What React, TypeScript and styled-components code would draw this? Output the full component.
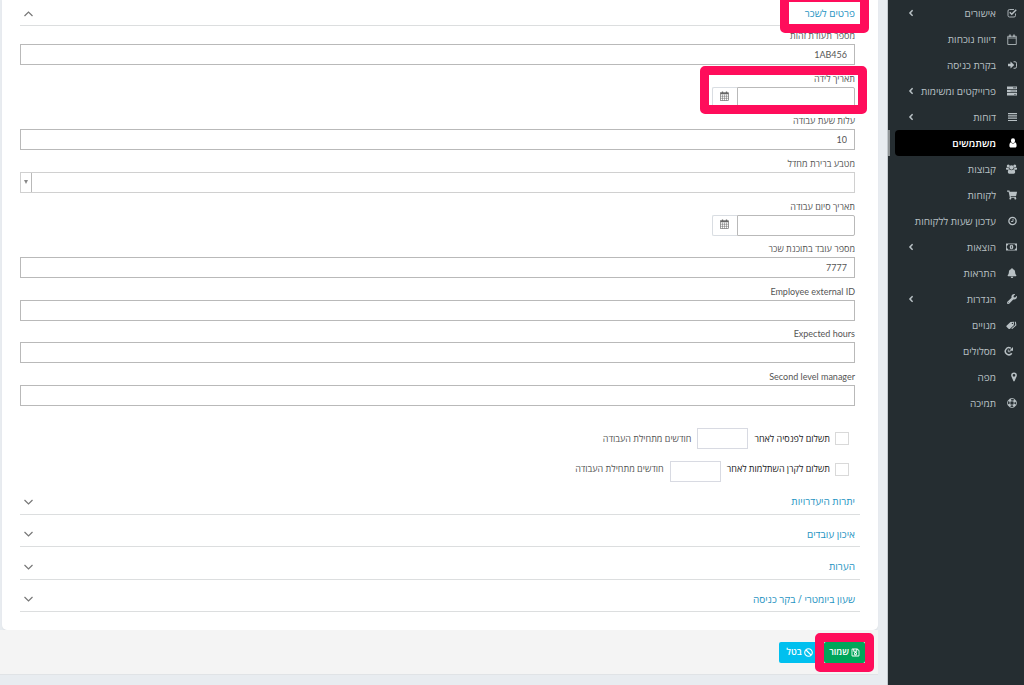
import React from "react";
import styled, { createGlobalStyle, css } from "styled-components";
import { FaShoppingCart, FaBell, FaWrench, FaRegSave, FaBan, FaAngleLeft } from "react-icons/fa";

const GlobalStyle = createGlobalStyle`
  *, *::before, *::after { box-sizing: border-box; }
  body {
    margin: 0;
    background: #e8ecf0;
    color: #555;
    font-family: "Open Sans", "Noto Sans", sans-serif;
    font-size: 9px;
    line-height: 16px;
  }
  button, input, select { font: inherit; color: inherit; }
`;

const Page = styled.div`
  display: flex;
  min-height: 100vh;
`;

const Sidebar = styled.nav`
  flex: 0 0 136px;
  background: #252d31;
  box-shadow: -1px 0 0 #c3c9cd;
`;

const MenuList = styled.ul`
  list-style: none;
  margin: 0;
  padding: 0;
`;

const MenuItem = styled.li<{ $active?: boolean }>`
  height: 26px;
  padding-left: 5px;
  border-left: 2px solid ${(p) => (p.$active ? "#8f9496" : "transparent")};
`;

const MenuLink = styled.a<{ $active?: boolean }>`
  display: flex;
  align-items: center;
  height: 26px;
  padding: 0 7px 0 11px;
  border-radius: 4px 0 0 4px;
  color: #b8c0c4;
  font-size: 10px;
  text-decoration: none;
  white-space: nowrap;
  ${(p) =>
    p.$active &&
    css`
      background: #000;
      color: #fff;
      font-weight: 600;
    `}
`;

const MenuIcon = styled.span`
  display: flex;
  width: 12px;
  margin-left: 9px;
  font-size: 10px;

  svg {
    flex: none;
  }
`;

const MenuChevron = styled(FaAngleLeft)`
  margin-right: auto;
  font-size: 10px;
`;

const Main = styled.main`
  flex: 1;
  min-width: 0;
  padding: 0 10px 10px 0;
`;

const Card = styled.div`
  margin-left: 2px;
  padding: 0 18px 18px;
  background: #fff;
  border-radius: 0 0 5px 5px;
  box-shadow: 0 1px 1px #dde1e4;
`;

const SectionHead = styled.h2`
  flex: 1;
  margin: 0;
  border-bottom: 1px solid #dcdedf;
  font-size: 10px;
  font-weight: 400;
`;

const SectionButton = styled.button`
  display: flex;
  align-items: center;
  justify-content: space-between;
  width: 100%;
  height: 25px;
  padding: 0 5px 0 4px;
  border: 0;
  background: none;
  color: #1f93c2;
  text-align: right;
`;

const SectionChevron = styled.svg<{ $up?: boolean }>`
  width: 9px;
  height: 9px;
  fill: none;
  stroke: #777;
  stroke-width: 1.2;
  transform: ${(p) => (p.$up ? "rotate(180deg) translateY(-2px)" : "none")};
`;

const Marked = styled.span`
  position: relative;
`;

const Highlight = styled.span<{ $inset: string }>`
  position: absolute;
  inset: ${(p) => p.$inset};
  border: 9px solid #ff0d5b;
  border-radius: 5px;
  pointer-events: none;
  z-index: 2;
`;

const Fields = styled.div`
  display: flex;
  flex-direction: column;
  justify-content: space-between;
  min-height: 378px;
  margin: 2px 5px 0 0;
`;

const Field = styled.div`
  display: flex;
  flex-direction: column;
`;

const FieldLabel = styled.label`
  align-self: flex-start;
  height: 16px;
  font-family: Lato, "Open Sans", sans-serif;
`;

const TextInput = styled.input`
  width: 100%;
  height: 21px;
  padding: 0 7px;
  border: 1px solid #b9b9b9;
  border-radius: 0;
  background: #fff;
  font-family: Lato, "Open Sans", sans-serif;
`;

const SelectBox = styled.div`
  display: flex;
  height: 21px;
  border: 1px solid #d0d0d0;
`;

const Select = styled.select`
  flex: 1;
  appearance: none;
  border: 0;
  background: #fff;
`;

const SelectArrow = styled.span`
  display: flex;
  align-items: center;
  justify-content: center;
  width: 11px;
  border-right: 1px solid #b9b9b9;

  svg {
    width: 4px;
    height: 4px;
    fill: #888;
  }
`;

const DateGroup = styled.span`
  position: relative;
  display: flex;
  width: 143px;
  height: 21px;
`;

const DateInput = styled(TextInput)`
  width: 118px;
  border-radius: 0 2px 2px 0;
`;

const DateButton = styled.button`
  flex: 1;
  display: flex;
  align-items: center;
  justify-content: center;
  padding: 0 1px 2px 0;
  border: 1px solid #d9dde2;
  border-right: 0;
  border-radius: 2px 0 0 2px;
  background: #fff;
  color: #666;
`;

const Conditions = styled.div`
  display: flex;
  flex-direction: column;
  gap: 12px;
  padding: 22px 11px 0 0;
`;

const Condition = styled.div<{ $top?: boolean }>`
  display: flex;
  align-items: ${(p) => (p.$top ? "flex-start" : "center")};
  gap: 6px;
  height: 21px;
`;

const CheckLabel = styled.label`
  display: flex;
  align-items: center;
  gap: 5px;
  color: #222;
`;

const Checkbox = styled.input`
  appearance: none;
  width: 14px;
  height: 13px;
  margin: 0;
  border: 1px solid #d9d9d9;
  background: #fff;
`;

const MonthsInput = styled(TextInput)`
  width: 51px;
  border-color: #d8dae2;
`;

const Sections = styled.div`
  display: flex;
  flex-direction: column;
  min-height: 130px;

  button {
    height: 24px;
    margin-top: 7px;
  }
`;

const Footer = styled.footer`
  display: flex;
  align-items: center;
  height: 45px;
  padding-right: 13px;
  border-bottom: 1px solid #e0e3e6;
  background: #f4f4f4;
`;

const ActionButton = styled.button<{ $color: string }>`
  position: relative;
  display: flex;
  align-items: center;
  justify-content: center;
  gap: 2px;
  width: 41px;
  height: 21px;
  padding: 0;
  border: 0;
  border-radius: 2px;
  background: ${(p) => p.$color};
  color: #fff;
  font-weight: 600;
`;

const Footing = styled.div`
  display: flex;
  gap: 4px;
`;

const Glyph = ({ w = 10, h = 10, children }: { w?: number; h?: number; children: React.ReactNode }) => (
  <svg width={w} height={h} viewBox={`0 0 ${w * 2} ${h * 2}`} fill="currentColor">
    {children}
  </svg>
);

const CheckIcon = () => (
  <Glyph>
    <path
      d="M17 11v4a3 3 0 0 1-3 3H5a3 3 0 0 1-3-3V6a3 3 0 0 1 3-3h9"
      fill="none"
      stroke="currentColor"
      strokeWidth="1.800"
    />
    <path d="M5.500 8.500l4 4 9-9" fill="none" stroke="currentColor" strokeWidth="3" />
  </Glyph>
);

const CalendarOutline = () => (
  <Glyph h={11}>
    <path d="M1.500 4.500h17V21h-17zM1.500 8h17" fill="none" stroke="currentColor" strokeWidth="1.700" />
    <path d="M6 1v5M14 1v5" stroke="currentColor" strokeWidth="2.600" />
  </Glyph>
);

const SignInIcon = () => (
  <Glyph w={9}>
    <path d="M0 7.500h5V3l7.500 7-7.500 7v-4.500H0z" />
    <path d="M11 3.500h3a3 3 0 0 1 3 3v7a3 3 0 0 1-3 3h-3" fill="none" stroke="currentColor" strokeWidth="1.900" />
  </Glyph>
);

const TasksIcon = () => (
  <Glyph>
    <path
      fillRule="evenodd"
      d="M0 1h20v5H0zM12 3v1.400h6.500V3zM0 7.500h20v5H0zM7 9.300v1.400h11.500V9.300zM0 14h20v5H0zM14 15.800v1.400h4.500v-1.400z"
    />
  </Glyph>
);

const ReportsIcon = () => (
  <Glyph w={9}>
    <path d="M0 2h18v2.400H0zM0 6.600h18V9H0zM0 11.200h18v2.400H0zM0 15.800h18v2.400H0z" />
  </Glyph>
);

const UserIcon = () => (
  <Glyph w={8}>
    <ellipse cx="8" cy="5.500" rx="4.200" ry="4.800" />
    <path d="M4 8.500C1.500 9 .8 12 .8 15.500c0 2.200 1.200 3.500 3 3.500h8.400c1.800 0 3-1.300 3-3.500 0-3.500-.7-6.500-3.200-7-1 1.800-2.300 2.500-4 2.500s-3-.7-4-2.500z" />
  </Glyph>
);

const UsersIcon = () => (
  <Glyph w={11}>
    <circle cx="4.500" cy="4" r="3" />
    <circle cx="17.500" cy="4" r="3" />
    <circle cx="11" cy="7" r="4.300" />
    <path d="M0 7.500h5.500c0 2 .5 3 1.300 4H2c-1.400 0-2-.8-2-2zM22 7.500h-5.500c0 2-.5 3-1.300 4H20c1.400 0 2-.8 2-2z" />
    <path d="M7 11c-2.500 0-3.300 2.500-3.300 5.200 0 2 1.100 3.300 3 3.300h8.600c1.900 0 3-1.300 3-3.300 0-2.700-.8-5.200-3.300-5.200-1 1-2.400 1.500-4 1.500S8 12 7 11z" />
  </Glyph>
);

const ClockIcon = () => (
  <Glyph w={9}>
    <circle cx="9" cy="10" r="7.300" fill="none" stroke="currentColor" strokeWidth="2.600" />
    <path d="M10 5.500V11H6" fill="none" stroke="currentColor" strokeWidth="1.800" />
  </Glyph>
);

const MoneyIcon = () => (
  <Glyph w={11}>
    <path
      fillRule="evenodd"
      d="M0 3h22v14H0zM4.500 4.600A3 3 0 0 1 1.600 7.500v5a3 3 0 0 1 2.900 2.900h13a3 3 0 0 1 2.900-2.900v-5a3 3 0 0 1-2.900-2.900z"
    />
    <ellipse cx="11" cy="10" rx="3.600" ry="4.400" />
    <path d="M11 7.500v5" stroke="#252d31" strokeWidth="1.300" />
  </Glyph>
);

const TagsIcon = () => (
  <Glyph w={11}>
    <path
      fillRule="evenodd"
      d="M16 3.500L9 4.200 1 11.500a1.500 1.500 0 0 0 0 2l4.600 4.300a1.500 1.500 0 0 0 2 0l8-7.300zM12.800 5.600a1.300 1.300 0 1 1 0 2.600 1.300 1.300 0 0 1 0-2.600z"
    />
    <path d="M17.500 3.500h2.300l1 7-8.300 7.500-2-.8 8-7.300z" />
  </Glyph>
);

const RouteIcon = () => (
  <Glyph w={13}>
    <path d="M15.500 14.500A7 7 0 1 1 13.500 4.500" fill="none" stroke="currentColor" strokeWidth="3" />
    <path d="M18 2v7.500h-7.500z" />
    <path d="M8.500 7v4.500H13" fill="none" stroke="currentColor" strokeWidth="1.800" />
  </Glyph>
);

const PinIcon = () => (
  <Glyph w={6}>
    <path
      fillRule="evenodd"
      d="M6 1a5.700 5.700 0 0 1 5.700 5.700c0 1-.2 1.700-.5 2.400L7.200 18.200a1.300 1.300 0 0 1-2.400 0L.8 9.100C.5 8.400.3 7.700.3 6.700A5.700 5.700 0 0 1 6 1zM6 4a2.700 2.700 0 1 0 0 5.400A2.700 2.700 0 0 0 6 4z"
    />
  </Glyph>
);

const SupportIcon = () => (
  <Glyph>
    <circle cx="10" cy="10" r="9" fill="none" stroke="currentColor" strokeWidth="1.700" />
    <circle cx="10" cy="10" r="4.300" fill="none" stroke="currentColor" strokeWidth="1.500" />
    <circle
      cx="10"
      cy="10"
      r="6.700"
      fill="none"
      stroke="currentColor"
      strokeWidth="4"
      strokeDasharray="5.500 5.024"
      strokeDashoffset="-2.500"
    />
  </Glyph>
);

const CalendarGrid = () => (
  <Glyph w={9}>
    <g fill="none" stroke="currentColor">
      <rect x="1" y="3.500" width="16" height="15.500" strokeWidth="1.300" />
      <path d="M1 5h16" strokeWidth="3" />
      <path d="M5 1v5M13 1v5" strokeWidth="2.600" />
      <path d="M1 10.500h16M1 14.700h16M5 7v12M9 7v12M13 7v12" strokeWidth="1" />
    </g>
  </Glyph>
);

type Entry = { label: string; icon: React.ReactNode; more?: boolean; active?: boolean };

const menu: Entry[] = [
  { label: "אישורים", icon: <CheckIcon />, more: true },
  { label: "דיווח נוכחות", icon: <CalendarOutline /> },
  { label: "בקרת כניסה", icon: <SignInIcon /> },
  { label: "פרוייקטים ומשימות", icon: <TasksIcon />, more: true },
  { label: "דוחות", icon: <ReportsIcon />, more: true },
  { label: "משתמשים", icon: <UserIcon />, active: true },
  { label: "קבוצות", icon: <UsersIcon /> },
  { label: "לקוחות", icon: <FaShoppingCart /> },
  { label: "עדכון שעות ללקוחות", icon: <ClockIcon /> },
  { label: "הוצאות", icon: <MoneyIcon />, more: true },
  { label: "התראות", icon: <FaBell /> },
  { label: "הגדרות", icon: <FaWrench />, more: true },
  { label: "מנויים", icon: <TagsIcon /> },
  { label: "מסלולים", icon: <RouteIcon /> },
  { label: "מפה", icon: <PinIcon /> },
  { label: "תמיכה", icon: <SupportIcon /> },
];

const Chevron = ({ up }: { up?: boolean }) => (
  <SectionChevron $up={up} viewBox="0 0 9 9">
    <path d="M.5 3l4 4 4-4" />
  </SectionChevron>
);

function Section({ title, open, marked }: { title: string; open?: boolean; marked?: boolean }) {
  return (
    <SectionHead>
      <SectionButton type="button" aria-expanded={!!open}>
        <Marked>
          {title}
          {marked && <Highlight $inset="-12px -14px -12px -25px" />}
        </Marked>
        <Chevron up={open} />
      </SectionButton>
    </SectionHead>
  );
}

function TextField({ id, label, value }: { id: string; label: string; value?: string }) {
  return (
    <Field>
      <FieldLabel htmlFor={id}>{label}</FieldLabel>
      <TextInput id={id} defaultValue={value} />
    </Field>
  );
}

function DateField({ id, label, marked }: { id: string; label: string; marked?: boolean }) {
  return (
    <Field>
      <FieldLabel htmlFor={id}>{label}</FieldLabel>
      <DateGroup>
        <DateInput id={id} />
        <DateButton type="button" aria-label={label}>
          <CalendarGrid />
        </DateButton>
        {marked && <Highlight $inset="-21px -12px -6px" />}
      </DateGroup>
    </Field>
  );
}

function ConditionRow({ id, label, top }: { id: string; label: string; top?: boolean }) {
  return (
    <Condition $top={top}>
      <CheckLabel>
        <Checkbox type="checkbox" />
        {label}
      </CheckLabel>
      <MonthsInput id={id} />
      <label htmlFor={id}>חודשים מתחילת העבודה</label>
    </Condition>
  );
}

export default function App() {
  return (
    <Page dir="rtl" lang="he">
      <GlobalStyle />
      <Sidebar>
        <MenuList>
          {menu.map((m) => (
            <MenuItem key={m.label} $active={m.active}>
              <MenuLink href="#" $active={m.active}>
                <MenuIcon>{m.icon}</MenuIcon>
                {m.label}
                {m.more && <MenuChevron />}
              </MenuLink>
            </MenuItem>
          ))}
        </MenuList>
      </Sidebar>
      <Main>
        <Card>
          <Section title="פרטים לשכר" open marked />
          <Fields>
            <TextField id="idnum" label="מספר תעודת זהות" value="1AB456" />
            <DateField id="birth" label="תאריך לידה" marked />
            <TextField id="cost" label="עלות שעת עבודה" value="10" />
            <Field>
              <FieldLabel htmlFor="currency">מטבע ברירת מחדל</FieldLabel>
              <SelectBox>
                <Select id="currency" />
                <SelectArrow>
                  <svg viewBox="0 0 4 4">
                    <path d="M0 0h4L2 4z" />
                  </svg>
                </SelectArrow>
              </SelectBox>
            </Field>
            <DateField id="end" label="תאריך סיום עבודה" />
            <TextField id="payroll" label="מספר עובד בתוכנת שכר" value="7777" />
            <TextField id="external" label="Employee external ID" />
            <TextField id="hours" label="Expected hours" />
            <TextField id="manager" label="Second level manager" />
          </Fields>
          <Conditions>
            <ConditionRow id="pension" label="תשלום לפנסיה לאחר" />
            <ConditionRow id="fund" label="תשלום לקרן השתלמות לאחר" top />
          </Conditions>
          <Sections>
            <Section title="יתרות היעדרויות" />
            <Section title="איכון עובדים" />
            <Section title="הערות" />
            <Section title="שעון ביומטרי / בקר כניסה" />
          </Sections>
        </Card>
        <Footer>
          <Footing>
            <ActionButton type="button" $color="#00a65a">
              <FaRegSave />
              שמור
              <Highlight $inset="-9px" />
            </ActionButton>
            <ActionButton type="button" $color="#00c0ef">
              <FaBan />
              בטל
            </ActionButton>
          </Footing>
        </Footer>
      </Main>
    </Page>
  );
}
